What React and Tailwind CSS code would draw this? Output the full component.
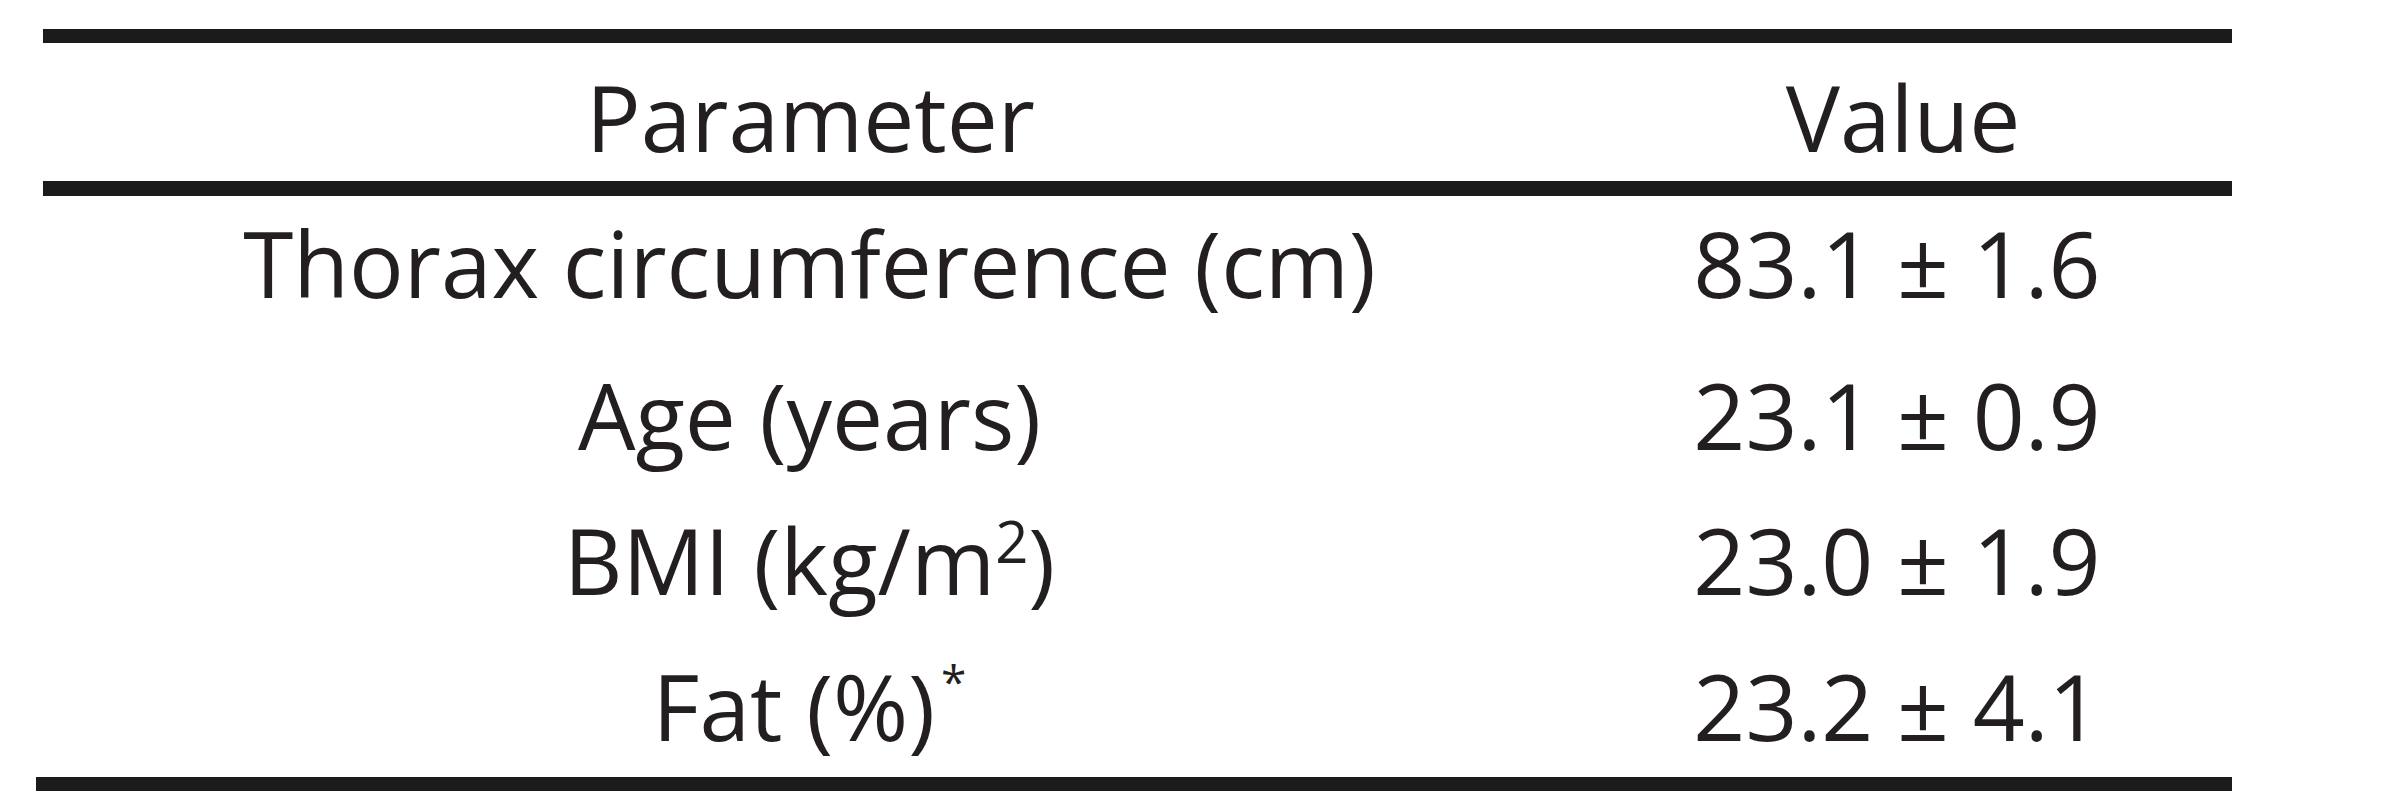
const rows = [
    { label: <>Thorax circumference (cm)</>, value: '83.1 ± 1.6', mt: 'mt-0' },
    { label: <>Age (years)</>, value: '23.1 ± 0.9', mt: 'mt-[23px]' },
    { label: <>BMI (kg/m<sup className="text-[58px] -top-[32px]">2</sup>)</>, value: '23.0 ± 1.9', mt: 'mt-[16px]' },
    { label: <>Fat (%)<sup className="text-[46px] -top-[42px] ml-[6px]">*</sup></>, value: '23.2 ± 4.1', mt: 'mt-[17px]' },
];

function App() {
    return (
        <div className="w-[2385px] h-[800px] bg-white pt-[29px] pl-[36px] text-[#231f20]" style={{ fontFamily: '"Open Sans", "Liberation Sans", sans-serif' }}>
            <div className="w-[2196px] flex flex-col">
                <div className="ml-[7px] w-[2189px] h-[14px] bg-[#1b1b1c]" />
                <div className="ml-[7px] w-[2189px] h-[138px] grid grid-cols-[1543px_646px] text-[91px] leading-[124px] pt-[12px]">
                    <div className="text-center pr-[8px]">Parameter</div>
                    <div className="text-center pr-[12px]">Value</div>
                </div>
                <div className="ml-[7px] w-[2189px] h-[15px] bg-[#1b1b1c]" />
                <div className="ml-[7px] w-[2189px] flex flex-col pb-[9px]">
                    {rows.map((r, i) => (
                        <div key={i} className={`grid grid-cols-[1543px_646px] text-[91px] leading-[124px] pt-[5px] ${r.mt}`}>
                            <div className="text-center pr-[10px] whitespace-nowrap">{r.label}</div>
                            <div className="text-center pr-[24px] whitespace-nowrap">{r.value}</div>
                        </div>
                    ))}
                </div>
                <div className="w-[2196px] h-[14px] bg-[#1b1b1c]" />
            </div>
        </div>
    );
}

export default App;
